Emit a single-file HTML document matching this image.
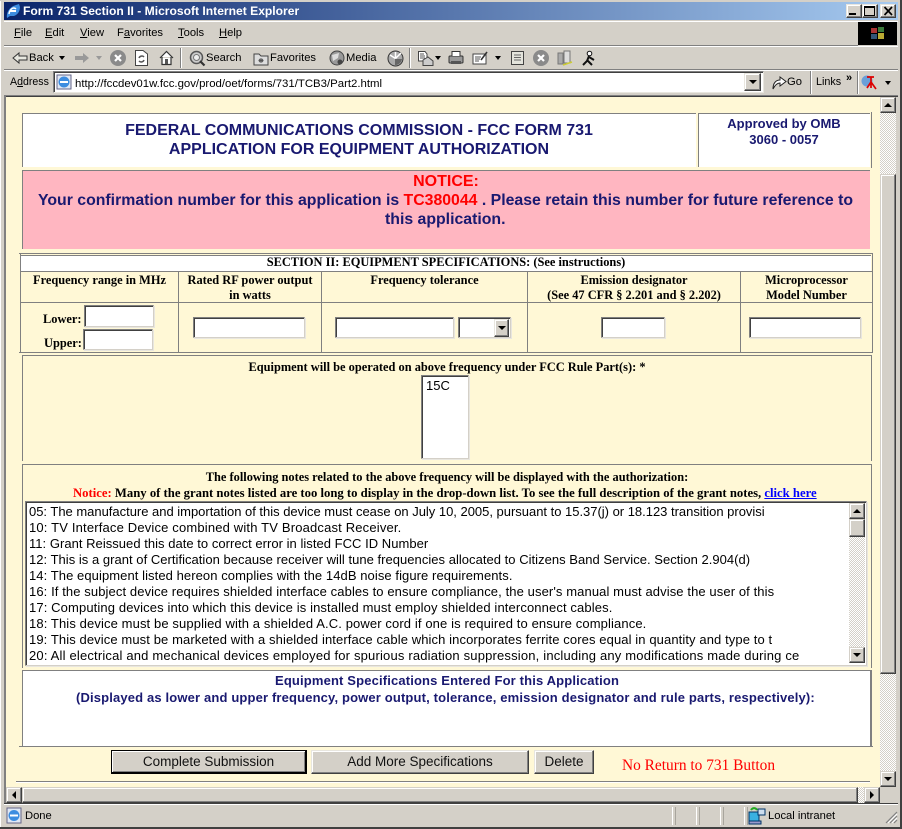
<!DOCTYPE html>
<html><head><meta charset="utf-8"><title>Form 731 Section II</title>
<style>
html,body{margin:0;padding:0;width:902px;height:829px;overflow:hidden;background:#d4d0c8}
#r{position:relative;width:902px;height:829px;overflow:hidden;background:#d4d0c8;font-family:"Liberation Sans",sans-serif}
#r div,#r svg{position:absolute;box-sizing:border-box}
.t{white-space:nowrap;line-height:16px}
.ui{font-size:11.2px;color:#000}
u{text-decoration:underline}
.s{font:bold 12.4px/15px "Liberation Serif",serif;color:#000;text-align:center;white-space:nowrap}
.n{font-weight:bold;color:#191970;text-align:center;white-space:nowrap}
.i{background:#fff;border:1px solid;border-color:#808080 #d4d0c8 #d4d0c8 #808080;box-shadow:inset 1px 1px 0 #404040,1px 1px 0 #e8e6df}
.b{background:#d4d0c8;border:1px solid;border-color:#e8e6df #404040 #404040 #e8e6df;box-shadow:inset -1px -1px 0 #808080,inset 1px 1px 0 #fff}
.sb{background:#d4d0c8;border:1px solid;border-color:#d4d0c8 #404040 #404040 #d4d0c8;box-shadow:inset -1px -1px 0 #808080,inset 1px 1px 0 #fff}
.d{background:repeating-conic-gradient(#d4d0c8 0 25%,#fff 0 50%) 0 0/2px 2px}
.g{background:#808080}
.w{background:#fff}
.btn{font-size:13.5px;line-height:22px;text-align:center;color:#111;white-space:nowrap}
.a{width:0;height:0;border-left:4px solid transparent;border-right:4px solid transparent}
.up{border-bottom:4px solid #000}
.dn{border-top:4px solid #000}
.o{font-size:13px;line-height:16px;color:#000;white-space:nowrap;left:29px;width:820px;overflow:hidden}
</style></head><body>
<div id="r">
<!-- window frame -->
<div style="left:0;top:0;width:902px;height:1px;background:#d4d0c8"></div>
<div style="left:0;top:1px;width:1px;height:828px;background:#fff"></div>
<div style="left:0;top:827px;width:902px;height:2px;background:#404040"></div>
<div style="left:900px;top:0;width:2px;height:829px;background:#404040"></div>
<!-- title bar -->
<div style="left:4px;top:2px;width:894px;height:18px;background:linear-gradient(90deg,#0a246a,#a6caf0)"></div>
<svg style="left:5px;top:3px" width="16" height="16" viewBox="0 0 16 16"><path d="M2 15 C1 10 4 4 11 2 L14 1 L15 4 C15 9 12 12 9 13 L5 13 Z" fill="#3d8de0"/><path d="M5 8 H11" stroke="#fff" stroke-width="2"/><path d="M4 11 C5 5 9 4 11 6" fill="none" stroke="#fff" stroke-width="1.5"/></svg>
<div class="t" style="left:23px;top:3px;color:#fff;font:bold 12.1px/16px 'Liberation Sans',sans-serif">Form 731 Section II - Microsoft Internet Explorer</div>
<div class="b" style="left:846px;top:4px;width:16px;height:14px"></div>
<div style="left:849px;top:13px;width:7px;height:2px;background:#000"></div>
<div class="b" style="left:862px;top:4px;width:16px;height:14px"></div>
<div style="left:864px;top:6px;width:11px;height:10px;border:1px solid #000;border-top-width:2px"></div>
<div class="b" style="left:880px;top:4px;width:16px;height:14px"></div>
<svg style="left:883px;top:6px" width="11" height="10"><path d="M1.5 1 L9 9 M9 1 L1.5 9" stroke="#000" stroke-width="1.7"/></svg>
<!-- menu -->
<div style="left:4px;top:21px;width:894px;height:1px;background:#fff"></div>
<div style="left:4px;top:45px;width:854px;height:1px;background:#808080"></div>
<div style="left:4px;top:46px;width:894px;height:1px;background:#fff"></div>
<div class="t ui" style="left:14px;top:25px"><u>F</u>ile</div>
<div class="t ui" style="left:45px;top:25px"><u>E</u>dit</div>
<div class="t ui" style="left:80px;top:25px"><u>V</u>iew</div>
<div class="t ui" style="left:117px;top:25px">F<u>a</u>vorites</div>
<div class="t ui" style="left:178px;top:25px"><u>T</u>ools</div>
<div class="t ui" style="left:219px;top:25px"><u>H</u>elp</div>
<div style="left:858px;top:22px;width:39px;height:23px;background:#000"></div>
<svg style="left:869px;top:25px" width="18" height="17"><rect x="2" y="3" width="6" height="5" fill="#a33"/><rect x="9" y="2" width="6" height="5" fill="#3a7a3a"/><rect x="2" y="9" width="6" height="5" fill="#357"/><rect x="9" y="8" width="6" height="6" fill="#ba3"/></svg>
<!-- toolbar -->
<div style="left:4px;top:69px;width:894px;height:1px;background:#808080"></div>
<div style="left:4px;top:70px;width:894px;height:1px;background:#fff"></div>
<svg style="left:12px;top:50px" width="16" height="16"><path d="M1 8 L7 3 V6 H15 V10 H7 V13 Z" fill="#e8e8e0" stroke="#333"/></svg>
<div class="t ui" style="left:29px;top:50px">Back</div>
<div class="a dn" style="left:59px;top:56px;border-left-width:3px;border-right-width:3px"></div>
<svg style="left:74px;top:50px" width="16" height="16"><path d="M15 8 L9 3 V6 H1 V10 H9 V13 Z" fill="#999"/></svg>
<div class="a" style="left:96px;top:56px;border-left-width:3px;border-right-width:3px;border-top:4px solid #999"></div>
<svg style="left:110px;top:50px" width="17" height="17"><circle cx="8" cy="8" r="8" fill="#8a8a8a"/><path d="M5 5 L11 11 M11 5 L5 11" stroke="#fff" stroke-width="2.2"/></svg>
<svg style="left:134px;top:49px" width="15" height="18"><path d="M1.5 1.5 H9 L13.5 5 V16.5 H1.5 Z" fill="#fff" stroke="#444"/><path d="M5 9 A3 3 0 0 1 10 8 M10 11 A3 3 0 0 1 5 12" fill="none" stroke="#555" stroke-width="1.5"/></svg>
<svg style="left:159px;top:50px" width="15" height="16"><path d="M1 8 L7.5 1.5 L14 8 M3 7 V14.5 H12 V7" fill="#fff" stroke="#333" stroke-width="1.2"/><rect x="6" y="9" width="3" height="5" fill="#555"/></svg>
<div style="left:180px;top:48px;width:1px;height:20px;background:#808080"></div>
<div style="left:181px;top:48px;width:1px;height:20px;background:#fff"></div>
<svg style="left:189px;top:50px" width="17" height="17"><circle cx="7.5" cy="7.5" r="6" fill="#ccc" stroke="#555" stroke-width="1.5"/><circle cx="7.5" cy="7.5" r="3" fill="#eee" stroke="#777"/><path d="M11 11 L15.5 15.5" stroke="#333" stroke-width="2.2"/></svg>
<div class="t ui" style="left:206px;top:50px">Search</div>
<svg style="left:253px;top:51px" width="17" height="15"><path d="M1 3 H6 L8 5 H15 V14 H1 Z" fill="#ddd" stroke="#444"/><path d="M8 7 V12 M5.5 9.5 H10.5 M6 8 L10 11 M10 8 L6 11" stroke="#555"/></svg>
<div class="t ui" style="left:270px;top:50px">Favorites</div>
<svg style="left:329px;top:50px" width="17" height="17"><circle cx="8" cy="8" r="7" fill="#999" stroke="#444"/><path d="M3 5 L10 3 L9 8 L4 11 Z" fill="#ddd"/><circle cx="11" cy="12" r="2.5" fill="#444"/></svg>
<div class="t ui" style="left:346px;top:50px">Media</div>
<svg style="left:387px;top:50px" width="17" height="17"><circle cx="8.5" cy="8.5" r="7.5" fill="#aaa" stroke="#333"/><path d="M8.5 8.5 L14 3 M8.5 8.5 V2 M8.5 8.5 L3 5" stroke="#fff" stroke-width="1.5"/><path d="M8 9 L15 9 A7 7 0 0 1 8 15 Z" fill="#666"/></svg>
<div style="left:409px;top:48px;width:1px;height:20px;background:#808080"></div>
<div style="left:410px;top:48px;width:1px;height:20px;background:#fff"></div>
<svg style="left:417px;top:50px" width="17" height="17"><path d="M1.5 1.5 H8 L10 4 V11 H1.5 Z" fill="#fff" stroke="#444"/><path d="M3 4 H7 M3 6 H8 M3 8 H8" stroke="#555"/><path d="M6 10 L11 7 L16 11 V15.5 H6 Z" fill="#ccc" stroke="#444"/></svg>
<div class="a dn" style="left:435px;top:56px;border-left-width:3px;border-right-width:3px"></div>
<svg style="left:448px;top:50px" width="16" height="16"><rect x="1" y="6" width="14" height="7" rx="1" fill="#999" stroke="#333"/><path d="M4 6 V1.5 H12 V6" fill="#fff" stroke="#333"/><rect x="3" y="11" width="10" height="3" fill="#555"/></svg>
<svg style="left:472px;top:50px" width="17" height="16"><rect x="1" y="4" width="13" height="10" fill="#fff" stroke="#444"/><path d="M3 7 H9 M3 9 H8 M3 11 H7" stroke="#555"/><path d="M9 10 L15 2" stroke="#333" stroke-width="1.6"/></svg>
<div class="a dn" style="left:495px;top:56px;border-left-width:3px;border-right-width:3px"></div>
<svg style="left:510px;top:50px" width="15" height="16"><path d="M1.5 1.5 H13.5 V14.5 H1.5 Z" fill="#e4e4dc" stroke="#444"/><path d="M4 5 H11 M4 7.5 H11 M4 10 H11" stroke="#666"/></svg>
<svg style="left:533px;top:50px" width="17" height="17"><circle cx="8" cy="8" r="8" fill="#8a8a8a"/><path d="M5 5 L11 11 M11 5 L5 11" stroke="#fff" stroke-width="2.2"/></svg>
<svg style="left:557px;top:50px" width="16" height="16"><rect x="1" y="3" width="5" height="11" fill="#aaa" stroke="#777"/><rect x="7" y="1" width="6" height="12" fill="#ddd" stroke="#777"/><path d="M6 15 L15 12" stroke="#cc3" stroke-width="1.5"/></svg>
<svg style="left:582px;top:50px" width="15" height="17"><circle cx="7.5" cy="3.5" r="2.3" fill="#fff" stroke="#111"/><path d="M7 6 L5 11 L1 15 M5 10 L10 15 M7 7 L12 10" stroke="#111" stroke-width="2" fill="none"/></svg>
<!-- address -->
<div class="t ui" style="left:10px;top:74px;font-size:10.6px">A<u>d</u>dress</div>
<div style="left:53px;top:71px;width:711px;height:22px;background:#fff;border:1px solid;border-color:#808080 #e8e6df #e8e6df #808080;box-shadow:inset 1px 1px 0 #404040"></div>
<svg style="left:56px;top:74px" width="16" height="16"><rect x="1" y="1" width="14" height="14" fill="#dfe8f5" stroke="#668"/><circle cx="8" cy="8" r="5.5" fill="#3d8de0"/><path d="M4 8 H12" stroke="#fff" stroke-width="2"/></svg>
<div class="t" style="left:75px;top:76px;font-size:11.4px;color:#000">http://fccdev01w.fcc.gov/prod/oet/forms/731/TCB3/Part2.html</div>
<div class="b" style="left:744px;top:73px;width:17px;height:18px"></div>
<div class="a dn" style="left:749px;top:80px"></div>
<svg style="left:771px;top:73px" width="17" height="18"><path d="M2 16 C2 10 5 7 9 7 V4 L15 8.5 L9 13 V10 C6 10 4 12 2 16 Z" fill="#fff" stroke="#222"/></svg>
<div class="t ui" style="left:787px;top:74px">Go</div>
<div style="left:811px;top:71px;width:1px;height:23px;background:#fff"></div>
<div style="left:810px;top:71px;width:1px;height:23px;background:#808080"></div>
<div class="t ui" style="left:816px;top:74px;font-size:10.8px">Links</div>
<div class="t" style="left:846px;top:71px;font:bold 11px/14px 'Liberation Sans',sans-serif">»</div>
<div style="left:857px;top:71px;width:1px;height:23px;background:#808080"></div>
<div style="left:858px;top:71px;width:1px;height:23px;background:#fff"></div>
<svg style="left:861px;top:74px" width="17" height="17"><circle cx="6" cy="7" r="5.5" fill="#6a9fd8"/><path d="M6 3 H13 M10 3 V14 M6 14 L10 8 L15 15" stroke="#d00" stroke-width="1.7" fill="none"/></svg>
<div class="a dn" style="left:885px;top:81px;border-left-width:3px;border-right-width:3px"></div>
<!-- content frame -->
<div style="left:4px;top:95px;width:894px;height:1px;background:#808080"></div>
<div style="left:4px;top:96px;width:894px;height:1px;background:#404040"></div>
<div style="left:4px;top:96px;width:2px;height:708px;background:#808080"></div>
<div style="left:6px;top:97px;width:874px;height:690px;background:#fff8d6"></div>
<div style="left:16px;top:781px;width:854px;height:1px;background:#808080"></div>
<div style="left:16px;top:782px;width:854px;height:1px;background:#fff"></div>
<!-- main v scrollbar -->
<div class="d" style="left:880px;top:97px;width:16px;height:690px"></div>
<div class="sb" style="left:880px;top:97px;width:16px;height:16px"></div>
<div class="a up" style="left:884px;top:103px"></div>
<div class="sb" style="left:880px;top:174px;width:16px;height:500px"></div>
<div class="sb" style="left:880px;top:771px;width:16px;height:16px"></div>
<div class="a dn" style="left:884px;top:777px"></div>
<!-- h scrollbar -->
<div class="sb" style="left:6px;top:787px;width:16px;height:16px"></div>
<div style="left:12px;top:791px;width:0;height:0;border-top:4px solid transparent;border-bottom:4px solid transparent;border-right:4px solid #000"></div>
<div class="sb" style="left:22px;top:787px;width:836px;height:16px"></div>
<div class="d" style="left:858px;top:787px;width:6px;height:16px"></div>
<div class="sb" style="left:864px;top:787px;width:16px;height:16px"></div>
<div style="left:870px;top:791px;width:0;height:0;border-top:4px solid transparent;border-bottom:4px solid transparent;border-left:4px solid #000"></div>
<div style="left:4px;top:803px;width:894px;height:1px;background:#404040"></div>
<div style="left:4px;top:804px;width:894px;height:1px;background:#fff"></div>
<!-- header table -->
<div class="w" style="left:22px;top:113px;width:848px;height:54px;border-top:1px solid #808080;border-left:1px solid #808080"></div>
<div style="left:696px;top:113px;width:2px;height:54px;background:#fff8d6"></div>
<div style="left:698px;top:113px;width:1px;height:54px;background:#808080"></div>
<div style="left:871px;top:112px;width:1px;height:56px;background:#808080"></div>
<div class="n" style="left:24px;top:121px;width:670px;font-size:16px;line-height:19px">FEDERAL COMMUNICATIONS COMMISSION - FCC FORM 731<br>APPLICATION FOR EQUIPMENT AUTHORIZATION</div>
<div class="n" style="left:699px;top:116px;width:170px;font-size:13px;line-height:16px">Approved by OMB<br>3060 - 0057</div>
<!-- notice -->
<div style="left:22px;top:170px;width:848px;height:79px;background:#ffb6c1;border-top:1px solid #808080;border-left:1px solid #808080"></div>
<div class="n" style="left:22px;top:172px;width:848px;color:#f00;font-size:16px;line-height:19px">NOTICE:</div>
<div class="n" style="left:22px;top:191px;width:868px;font-size:15.84px;line-height:19px;text-align:left;padding-left:16px">Your confirmation number for this application is <span style="color:#f00">TC380044</span> . Please retain this number for future reference to</div>
<div class="n" style="left:22px;top:210px;width:890px;font-size:15.84px;line-height:19px;text-align:left;padding-left:363px">this application.</div>
<!-- section table -->
<div style="left:19px;top:253px;width:854px;height:1px;background:#808080"></div>
<div style="left:872px;top:253px;width:1px;height:100px;background:#808080"></div>
<div style="left:20px;top:253px;width:1px;height:100px;background:#808080"></div>
<div style="left:19px;top:352px;width:854px;height:1px;background:#808080"></div>
<div class="w" style="left:21px;top:255px;width:850px;height:16px;border-top:1px solid #808080"></div>
<div style="left:20px;top:271px;width:852px;height:1px;background:#808080"></div>
<div style="left:20px;top:302px;width:852px;height:1px;background:#808080"></div>
<div style="left:178px;top:272px;width:1px;height:80px;background:#808080"></div>
<div style="left:321px;top:272px;width:1px;height:80px;background:#808080"></div>
<div style="left:527px;top:272px;width:1px;height:80px;background:#808080"></div>
<div style="left:740px;top:272px;width:1px;height:80px;background:#808080"></div>
<div class="s" style="left:20px;top:255px;width:852px">SECTION II: EQUIPMENT SPECIFICATIONS: (See instructions)</div>
<div class="s" style="left:21px;top:273px;width:157px">Frequency range in MHz</div>
<div class="s" style="left:179px;top:273px;width:142px">Rated RF power output<br>in watts</div>
<div class="s" style="left:322px;top:273px;width:205px">Frequency tolerance</div>
<div class="s" style="left:528px;top:273px;width:212px">Emission designator<br>(See 47 CFR § 2.201 and § 2.202)</div>
<div class="s" style="left:741px;top:273px;width:131px">Microprocessor<br>Model Number</div>
<div class="s" style="left:43px;top:312px">Lower:</div>
<div class="s" style="left:44px;top:336px">Upper:</div>
<div class="i" style="left:84px;top:305px;width:70px;height:22px"></div>
<div class="i" style="left:83px;top:329px;width:70px;height:21px"></div>
<div class="i" style="left:193px;top:317px;width:112px;height:21px"></div>
<div class="i" style="left:335px;top:317px;width:119px;height:21px"></div>
<div class="i" style="left:458px;top:317px;width:53px;height:21px"></div>
<div class="b" style="left:494px;top:319px;width:15px;height:18px"></div>
<div class="a dn" style="left:498px;top:326px"></div>
<div class="i" style="left:601px;top:317px;width:64px;height:21px"></div>
<div class="i" style="left:749px;top:317px;width:112px;height:21px"></div>
<!-- rule part -->
<div style="left:22px;top:355px;width:850px;height:1px;background:#808080"></div>
<div style="left:22px;top:355px;width:1px;height:106px;background:#808080"></div>
<div style="left:871px;top:355px;width:1px;height:106px;background:#808080"></div>
<div class="s" style="left:22px;top:360px;width:850px">Equipment will be operated on above frequency under FCC Rule Part(s): *</div>
<div class="i" style="left:421px;top:375px;width:48px;height:84px"></div>
<div class="t" style="left:426px;top:378px;font-size:13px">15C</div>
<!-- notes -->
<div style="left:22px;top:464px;width:850px;height:1px;background:#808080"></div>
<div style="left:22px;top:464px;width:1px;height:204px;background:#808080"></div>
<div style="left:871px;top:464px;width:1px;height:204px;background:#808080"></div>
<div class="s" style="left:22px;top:470px;width:850px">The following notes related to the above frequency will be displayed with the authorization:</div>
<div class="s" style="left:73px;top:486px;font-size:12.7px;text-align:left"><span style="color:#f00">Notice:</span> Many of the grant notes listed are too long to display in the drop-down list. To see the full description of the grant notes, <span style="color:#00f;text-decoration:underline">click here</span></div>
<div class="i" style="left:25px;top:501px;width:842px;height:165px"></div>
<div class="o" style="top:504px;letter-spacing:-.015px">05: The manufacture and importation of this device must cease on July 10, 2005, pursuant to 15.37(j) or 18.123 transition provisi</div>
<div class="o" style="top:520px;letter-spacing:.17px">10: TV Interface Device combined with TV Broadcast Receiver.</div>
<div class="o" style="top:536px;letter-spacing:.03px">11: Grant Reissued this date to correct error in listed FCC ID Number</div>
<div class="o" style="top:552px;letter-spacing:.03px">12: This is a grant of Certification because receiver will tune frequencies allocated to Citizens Band Service. Section 2.904(d)</div>
<div class="o" style="top:568px;letter-spacing:.075px">14: The equipment listed hereon complies with the 14dB noise figure requirements.</div>
<div class="o" style="top:584px;letter-spacing:.1px">16: If the subject device requires shielded interface cables to ensure compliance, the user's manual must advise the user of this</div>
<div class="o" style="top:600px;letter-spacing:.12px">17: Computing devices into which this device is installed must employ shielded interconnect cables.</div>
<div class="o" style="top:616px;letter-spacing:.115px">18: This device must be supplied with a shielded A.C. power cord if one is required to ensure compliance.</div>
<div class="o" style="top:632px;letter-spacing:.1px">19: This device must be marketed with a shielded interface cable which incorporates ferrite cores equal in quantity and type to t</div>
<div class="o" style="top:648px;letter-spacing:.18px">20: All electrical and mechanical devices employed for spurious radiation suppression, including any modifications made during ce</div>
<div class="d" style="left:849px;top:503px;width:16px;height:160px"></div>
<div class="sb" style="left:849px;top:503px;width:16px;height:16px"></div>
<div class="a up" style="left:853px;top:509px"></div>
<div class="sb" style="left:849px;top:519px;width:16px;height:18px"></div>
<div class="sb" style="left:849px;top:647px;width:16px;height:16px"></div>
<div class="a dn" style="left:853px;top:653px"></div>
<!-- entered specs -->
<div class="w" style="left:22px;top:670px;width:850px;height:76px;border-top:1px solid #808080;border-left:1px solid #808080;border-right:2px solid #808080"></div>
<div style="left:19px;top:746px;width:854px;height:1px;background:#808080"></div>
<div class="n" style="left:22px;top:672px;width:868px;font-size:13px;line-height:17px;letter-spacing:.15px;text-align:left;padding-left:253px">Equipment Specifications Entered For this Application</div>
<div class="n" style="left:22px;top:689px;width:868px;font-size:13px;line-height:17px;letter-spacing:.15px;text-align:left;padding-left:54px">(Displayed as lower and upper frequency, power output, tolerance, emission designator and rule parts, respectively):</div>
<!-- buttons -->
<div class="b btn" style="left:111px;top:750px;width:196px;height:24px;border-color:#000;border-width:1px 2px 2px 1px;box-shadow:inset 1px 1px 0 #fff,inset -1px -1px 0 #808080">Complete Submission</div>
<div class="b btn" style="left:311px;top:750px;width:218px;height:24px;line-height:22px">Add More Specifications</div>
<div class="b btn" style="left:534px;top:750px;width:60px;height:24px;line-height:22px">Delete</div>
<div class="t" style="left:622px;top:758px;font:15.4px/16px 'Liberation Serif',serif;color:#f00">No Return to 731 Button</div>
<!-- status bar -->
<div style="left:4px;top:805px;width:894px;height:20px;background:#d4d0c8"></div>
<svg style="left:6px;top:807px" width="16" height="17"><rect x="1" y="1" width="14" height="15" fill="#dfe8f5" stroke="#668"/><circle cx="8" cy="8.5" r="5.5" fill="#3d8de0"/><path d="M4 8.5 H12" stroke="#fff" stroke-width="2"/></svg>
<div class="t" style="left:25px;top:808px;font-size:11.2px">Done</div>
<div style="left:672px;top:807px;width:1px;height:18px;background:#fff"></div>
<div style="left:675px;top:807px;width:1px;height:18px;background:#a8a59d"></div>
<div style="left:696px;top:807px;width:1px;height:18px;background:#fff"></div>
<div style="left:699px;top:807px;width:1px;height:18px;background:#a8a59d"></div>
<div style="left:720px;top:807px;width:1px;height:18px;background:#fff"></div>
<div style="left:723px;top:807px;width:1px;height:18px;background:#a8a59d"></div>
<div style="left:744px;top:807px;width:1px;height:18px;background:#fff"></div>
<div style="left:747px;top:807px;width:1px;height:18px;background:#a8a59d"></div>
<svg style="left:748px;top:807px" width="18" height="18"><rect x="1" y="5" width="10" height="9" fill="#3ab0e0" stroke="#036"/><rect x="10" y="2" width="7" height="6" fill="#cde" stroke="#036"/><rect x="1" y="14" width="12" height="3" fill="#99c" stroke="#036"/><path d="M3 3 C5 0 8 1 9 3" stroke="#2a2" stroke-width="2" fill="none"/></svg>
<div class="t" style="left:768px;top:808px;font-size:11.2px">Local intranet</div>
<svg style="left:885px;top:811px" width="13" height="13"><path d="M12 1 L1 12 M12 5 L5 12 M12 9 L9 12" stroke="#808080" stroke-width="1.2"/><path d="M12 3 L3 12 M12 7 L7 12" stroke="#fff"/></svg>
</div>
</body></html>
